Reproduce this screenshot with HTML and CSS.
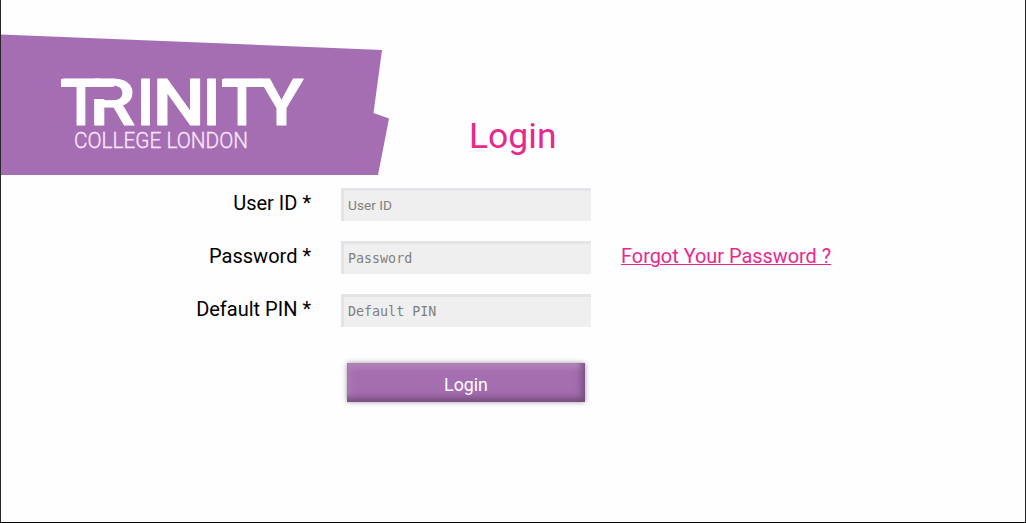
FILE: index.html
```html
<!DOCTYPE html>
<html lang="en">
<head>
<meta charset="utf-8">
<title>Login</title>
<link rel="stylesheet" href="styles.css">
</head>
<body>
<main class="page">
  <header class="header">
    <svg class="brand" viewBox="0 0 390 141" width="390" height="141" role="img" aria-label="Trinity College London">
      <polygon class="brand-shape" points="0,0.5 381,16 372.500,79 388,84.500 377,141 0,141"/>
      <text class="brand-name" y="91"><tspan x="60.500">T</tspan><tspan x="88.500" textLength="46" lengthAdjust="spacingAndGlyphs">R</tspan><tspan x="135.500">I</tspan><tspan x="151.500" textLength="52.500" lengthAdjust="spacingAndGlyphs">N</tspan><tspan x="201.500">I</tspan><tspan x="221.500">T</tspan><tspan x="258.500" textLength="44" lengthAdjust="spacingAndGlyphs">Y</tspan></text>
      <rect class="brand-bar" x="60" y="45" width="53" height="8"/>
      <rect class="brand-bar" x="221" y="45" width="45" height="8"/>
      <rect class="brand-gap" x="91.500" y="53" width="14" height="12"/>
      <text class="brand-sub" x="73" y="113.500" textLength="174" lengthAdjust="spacingAndGlyphs">COLLEGE LONDON</text>
    </svg>
    <h1 class="title">Login</h1>
  </header>
  <form class="form">
    <label class="label" for="user">User ID *</label>
    <input class="field" id="user" type="text" placeholder="User ID">
    <span></span>
    <label class="label" for="password">Password *</label>
    <input class="field mono" id="password" type="password" placeholder="Password">
    <a class="forgot" href="#">Forgot Your Password ?</a>
    <label class="label" for="pin">Default PIN *</label>
    <input class="field mono" id="pin" type="password" placeholder="Default PIN">
    <span></span>
    <button class="submit" type="button">Login</button>
  </form>
</main>
</body>
</html>
```
FILE: styles.css
```css
* { box-sizing: border-box; }
body {
  margin: 0;
  font-family: Roboto, "Liberation Sans", sans-serif;
  background: #fefdff;
}
.page {
  height: 523px;
  padding-top: 34px;
  overflow: hidden;
  border: solid #28262b;
  border-width: 0 1px 1px;
  border-bottom-color: #000;
}
.header {
  display: flex;
  height: 154px;
}
.brand { display: block; flex: none; }
.brand-shape, .brand-gap { fill: #a56eb3; }
.brand-bar { fill: #fff; }
.brand-name {
  font-size: 64px;
  font-weight: 500;
  fill: #fff;
  stroke: #fff;
  stroke-width: 0.9px;
  stroke-linejoin: round;
}
.brand-sub {
  font-size: 21.500px;
  font-weight: 300;
  fill: #fbe6ff;
  stroke: #fbe6ff;
  stroke-width: 0.3px;
}
.title {
  margin: 81px 0 0 78px;
  font-size: 35.500px;
  line-height: 42px;
  font-weight: 400;
  color: #e8298b;
}
.form {
  display: grid;
  grid-template-columns: 310px 250px auto;
  column-gap: 30px;
  row-gap: 20px;
  grid-auto-rows: 33px;
}
.label {
  text-align: right;
  font-size: 20px;
  line-height: 30px;
  color: #000;
}
.field {
  width: 250px;
  height: 33px;
  padding: 0 4px 2px;
  border: solid #e4e3e5;
  border-width: 3px 0 0 3px;
  border-radius: 0;
  background: #efefef;
  font: 13.700px Roboto, "Liberation Sans", sans-serif;
  outline: none;
}
.field::placeholder { color: #808080; opacity: 1; }
.mono { font: 13.333px "DejaVu Sans Mono", monospace; }
.forgot {
  font-size: 19.900px;
  line-height: 32px;
  color: #e8298b;
  text-decoration-thickness: 1px;
}
.submit {
  grid-column: 2;
  width: 238px;
  height: 39px;
  margin: 16px 0 0 6px;
  padding: 4px 0 0;
  border: 0;
  background: #a56eb0;
  color: #fff;
  font: 17.800px Roboto, "Liberation Sans", sans-serif;
  box-shadow: 0 0 5px #999, inset -3px -4px 7px #714a79, inset 2px 4px 6px #b78cbe;
}
```
